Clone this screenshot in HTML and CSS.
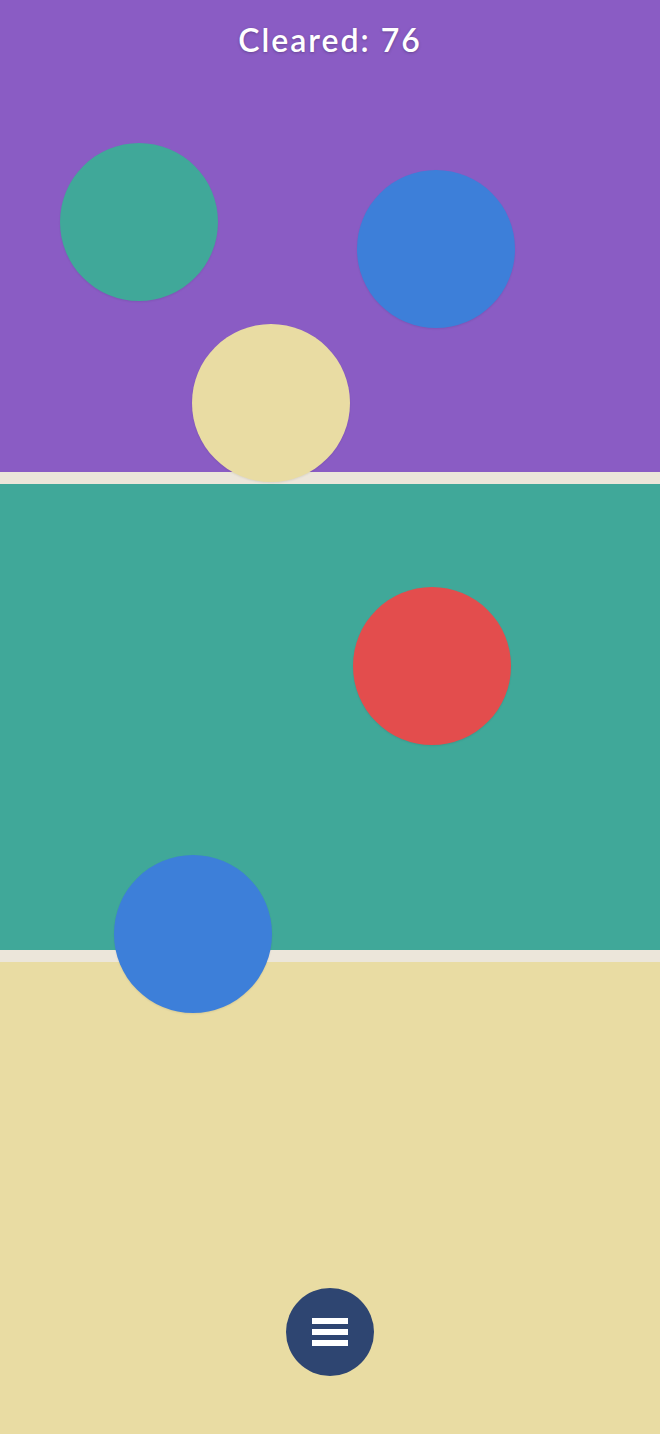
FILE: index.html
```html
<!DOCTYPE html>
<html lang="en">
<head>
<meta charset="utf-8">
<title>Cleared</title>
<link rel="stylesheet" href="styles.css">
</head>
<body>
<main class="game">
  <section class="band band-purple"></section>
  <div class="divider"></div>
  <section class="band band-teal"></section>
  <div class="divider"></div>
  <section class="band band-yellow"></section>

  <h1 class="score">Cleared: 76</h1>

  <div class="ball ball-teal" style="left:60px;top:143px"></div>
  <div class="ball ball-blue" style="left:357px;top:170px"></div>
  <div class="ball ball-yellow" style="left:192px;top:324px"></div>
  <div class="ball ball-red" style="left:353px;top:587px"></div>
  <div class="ball ball-blue" style="left:114px;top:855px"></div>

  <button class="menu-btn" aria-label="Menu">
    <span class="bar"></span>
    <span class="bar"></span>
    <span class="bar"></span>
  </button>
</main>
</body>
</html>
```
FILE: styles.css
```css
html, body {
  margin: 0;
  padding: 0;
}
body {
  width: 660px;
  height: 1434px;
  overflow: hidden;
  font-family: "Lato", "Noto Sans", sans-serif;
}
.game {
  position: relative;
  width: 660px;
  height: 1434px;
  display: flex;
  flex-direction: column;
}
.band-purple {
  height: 472px;
  background: #8a5cc4;
}
.band-teal {
  height: 466px;
  background: #40a899;
}
.band-yellow {
  height: 472px;
  background: #e9dca3;
}
.divider {
  height: 12px;
  background: #ece6da;
}
.score {
  position: absolute;
  top: 20px;
  left: 0;
  right: 0;
  margin: 0;
  text-align: center;
  color: #ffffff;
  font-size: 32px;
  font-weight: 600;
  line-height: 40px;
  letter-spacing: 2px;
  text-shadow: 0 1px 3px rgba(0, 0, 0, 0.25);
}
.ball {
  position: absolute;
  width: 158px;
  height: 158px;
  border-radius: 50%;
  box-shadow: 0 1px 2px rgba(0, 0, 0, 0.08);
}
.ball-teal { background: #40a899; }
.ball-blue { background: #3d7fd9; }
.ball-yellow { background: #e9dca3; }
.ball-red { background: #e34d4d; }
.menu-btn {
  position: absolute;
  left: 286px;
  top: 1288px;
  width: 88px;
  height: 88px;
  border: none;
  border-radius: 50%;
  background: #2e4571;
  padding: 0;
  display: flex;
  flex-direction: column;
  align-items: center;
  justify-content: center;
  gap: 5px;
}
.bar {
  display: block;
  width: 36px;
  height: 6px;
  background: #ffffff;
}
```
